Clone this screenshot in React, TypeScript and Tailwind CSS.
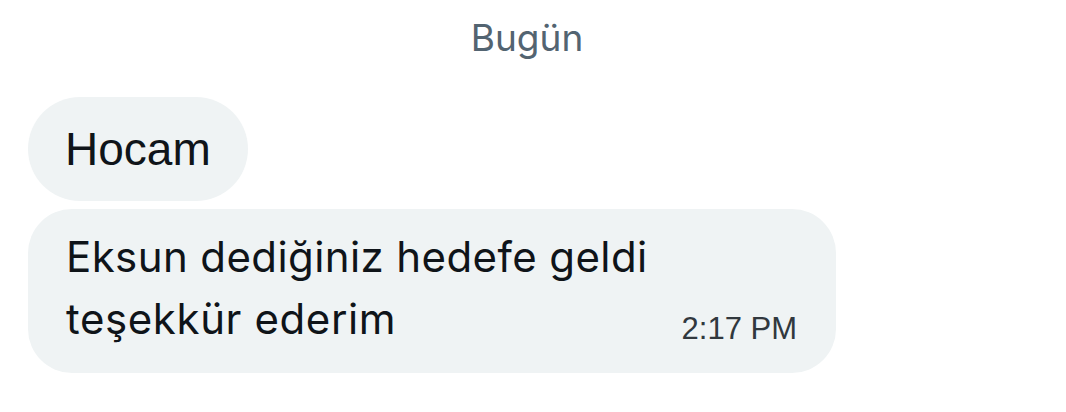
const App = () => {
  return (
    <div className="w-[1066px] h-[412px] bg-white font-['Inter',sans-serif] text-[#0f1419]">
      <div className="flex justify-center pr-[12px] pt-[10px]">
        <span className="text-[37px] leading-[56px] text-[#536471]">Bugün</span>
      </div>
      <div className="flex flex-col gap-2 pl-[28px] pt-[31px]">
        <div className="flex items-center h-[104px] w-[220px] rounded-full bg-[#eff3f4] pl-[37px]">
          <span className="font-['Liberation_Sans',sans-serif] text-[46px] leading-none">Hocam</span>
        </div>
        <div className="w-[808px] h-[164px] rounded-[44px] bg-[#eff3f4] pl-[38px] pr-[39px] pt-[17px]">
          <div className="text-[42px] leading-[62px] tracking-[0.4px]">Eksun dediğiniz hedefe geldi</div>
          <div className="flex justify-between items-baseline">
            <span className="text-[42px] leading-[62px] tracking-[0.6px]">teşekkür ederim</span>
            <span className="font-['Liberation_Sans',sans-serif] text-[31px] text-[#31383e] relative top-[5px]">
              2:17 PM
            </span>
          </div>
        </div>
      </div>
    </div>
  );
};

export default App;
